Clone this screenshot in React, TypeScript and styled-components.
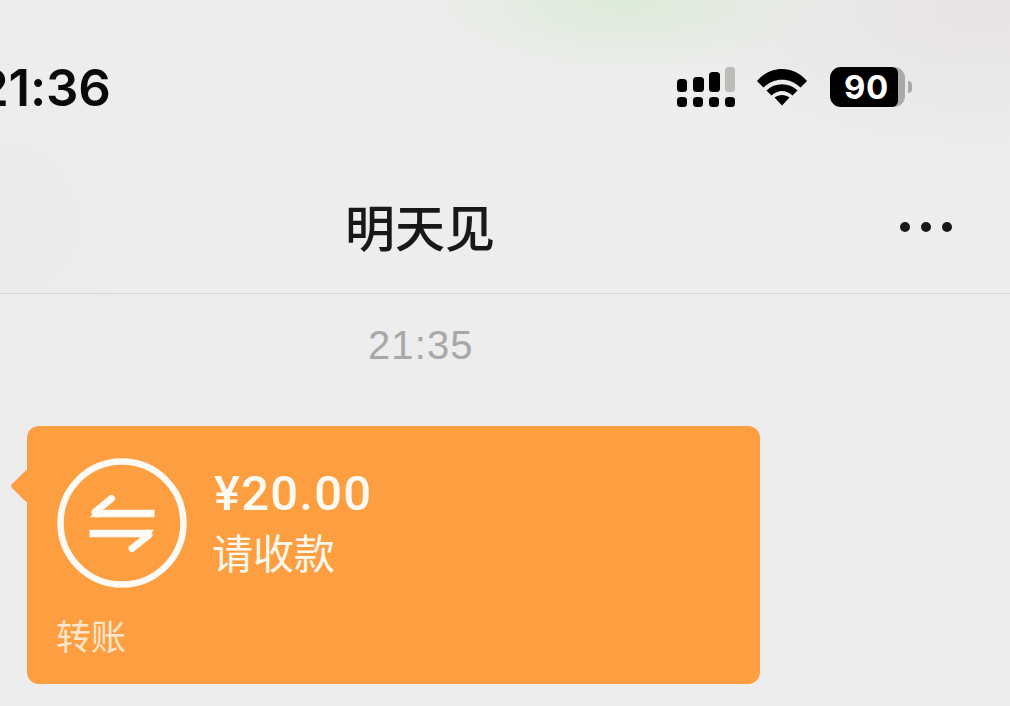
import React from "react";
import styled, { createGlobalStyle } from "styled-components";

const Global = createGlobalStyle`
  html, body { margin: 0; padding: 0; background: #ededed; }
  #root { width: 1010px; height: 706px; overflow: hidden; }
`;
const CJK = `"Noto Sans CJK SC", "Noto Sans", sans-serif`;
const Page = styled.div`
  width: 1010px; height: 706px; overflow: hidden; background: #ededed;
  display: flex; flex-direction: column;
  font-family: Inter, "Liberation Sans", ${CJK};
`;
const Header = styled.header`
  height: 294px; box-sizing: border-box; border-bottom: 1px solid #d6d6d6;
  display: flex; flex-direction: column;
  background:
    radial-gradient(ellipse 200px 75px at 625px 0px, rgba(214,234,208,.7), rgba(214,234,208,0) 100%),
    radial-gradient(ellipse 320px 150px at 980px 10px, rgba(228,224,224,.7), rgba(228,224,224,0) 100%),
    radial-gradient(ellipse 150px 150px at 0px 220px, rgba(232,232,232,.5), rgba(232,232,232,0) 100%),
    #ededed;
`;
const StatusBar = styled.div`
  height: 176px; box-sizing: border-box; padding: 58px 98px 0 0;
  display: flex; align-items: flex-start; justify-content: space-between;
`;
const Clock = styled.div`
  margin-left: -23px; font-size: 51px; line-height: 60px; font-weight: 600; color: #0a0a0a;
  letter-spacing: -.2px;
`;
const StatusIcons = styled.div`
  display: flex; align-items: flex-start; gap: 22px; padding-top: 8px;
`;
const Glyph = styled.svg`display: block; flex: none;`;
const Wifi = styled(Glyph)`margin: 2px 1px 0 0;`;
const Battery = styled.div`
  position: relative; width: 82px; height: 40px; margin-top: 1px;
`;
const BatteryBody = styled.div`
  width: 75px; height: 40px; border-radius: 11px; overflow: hidden; background: #a9a9a9;
`;
const BatteryFill = styled.div`
  width: 68px; height: 40px; border-radius: 0 6px 6px 0; background: #000;
  color: #fff; font-size: 33px; font-weight: 700; line-height: 41px;
  text-indent: 14px; letter-spacing: .5px;
`;
const BatteryCap = styled.div`
  position: absolute; right: 0; top: 14px; width: 4px; height: 12px;
  background: #a9a9a9; border-radius: 0 6px 6px 0;
`;
const NavBar = styled.div`
  flex: 1; position: relative; display: flex; align-items: center; justify-content: center;
  padding: 0 170px 20px 0;
`;
const Title = styled.h1`
  margin: 0; font-family: ${CJK}; font-size: 50px; line-height: 60px; font-weight: 500; color: #181818;
`;
const More = styled.div`
  position: absolute; right: 58px; top: 46px; display: flex; gap: 11px;
`;
const Dot = styled.span`
  width: 10px; height: 10px; border-radius: 50%; background: #181818;
`;
const Thread = styled.main`
  flex: 1; display: flex; flex-direction: column; padding: 27px 0 0 10px;
`;
const Stamp = styled.div`
  align-self: flex-start; margin-left: 358px; font-size: 40px; line-height: 48px; color: #a8a8a8;
  font-family: "Liberation Sans", sans-serif; letter-spacing: 1.1px;
`;
const Bubble = styled.article`
  position: relative; margin: 57px 0 0 17px; width: 733px; height: 258px; box-sizing: border-box;
  background: #fd9e40; border-radius: 12px; padding: 32px 30px 0;
  color: #fff; display: flex; flex-direction: column;
  &::before {
    content: ""; position: absolute; left: -12px; top: 48px; width: 24px; height: 24px;
    background: #fd9e40; transform: rotate(45deg); border-radius: 3px;
  }
`;
const BubbleMain = styled.div`display: flex; gap: 27px; position: relative;`;
const BubbleText = styled.div`display: flex; flex-direction: column; padding-top: 7px;`;
const Amount = styled.div`
  font-family: Roboto, sans-serif; font-size: 49px; line-height: 58px; font-weight: 500; letter-spacing: 1.2px;
  color: #fffaf2;
`;
const Note = styled.div`
  font-family: ${CJK}; font-size: 41px; line-height: 56px; font-weight: 400; margin-left: -2px; color: #fff8ee;
`;
const Footer = styled.div`
  font-family: ${CJK}; font-size: 35px; line-height: 44px; margin-top: 25px; margin-left: -1px; color: #ffe6cc; position: relative;
`;

const signalBars = [
  { x: 0, y: 13, w: 10, h: 13, c: "#000" },
  { x: 16, y: 11, w: 11, h: 15, c: "#000" },
  { x: 32, y: 6, w: 11, h: 20, c: "#000" },
  { x: 48, y: 1, w: 10, h: 25, c: "#bcbdb9" },
];

export default function App() {
  return (
    <Page>
      <Global />
      <Header>
        <StatusBar>
          <Clock>21:36</Clock>
          <StatusIcons>
            <Glyph width="58" height="41" viewBox="0 0 58 41">
              {signalBars.map((b) => (
                <rect key={b.x} x={b.x} y={b.y} width={b.w} height={b.h} rx="3.500" fill={b.c} />
              ))}
              {[0, 16, 32, 48].map((x) => <rect key={x} x={x} y="31" width="10" height="10" rx="3.500" fill="#000" />)}
            </Glyph>
            <Wifi width="50" height="38" viewBox="0 0 50 38">
              <path d="M0 13 C13 -3 37 -3 50 13 L43.500 19.500 C33 9 17 9 6.500 19.500 Z" fill="#000" />
              <path d="M9.500 22.500 C18 14 32 14 40.500 22.500 L35.500 27.500 C29 21.500 21 21.500 14.500 27.500 Z" fill="#000" />
              <path d="M17.500 29.500 C22 26 28 26 32.500 29.500 L25 37.500 Z" fill="#000" />
            </Wifi>
            <Battery>
              <BatteryBody>
                <BatteryFill>90</BatteryFill>
              </BatteryBody>
              <BatteryCap />
            </Battery>
          </StatusIcons>
        </StatusBar>
        <NavBar>
          <Title>明天见</Title>
          <More><Dot /><Dot /><Dot /></More>
        </NavBar>
      </Header>
      <Thread>
        <Stamp>21:35</Stamp>
        <Bubble>
          <BubbleMain>
            <Glyph width="130" height="130" viewBox="0 0 130 130">
              <circle cx="65" cy="65" r="61.500" fill="none" stroke="#fffaf4" strokeWidth="6.500" />
              <path d="M97.500 55.500 H38" fill="none" stroke="#fffaf4" strokeWidth="7.500" />
              <path d="M38 54 L54.500 40.500" fill="none" stroke="#fffaf4" strokeWidth="7" strokeLinecap="round" />
              <path d="M33 59.300 L40 50 L42 59.300 Z" fill="#fffaf4" />
              <path d="M32.500 75.500 H92" fill="none" stroke="#fffaf4" strokeWidth="7.500" />
              <path d="M92 77 L75 90.500" fill="none" stroke="#fffaf4" strokeWidth="7" strokeLinecap="round" />
              <path d="M97 71.700 L90 81 L88 71.700 Z" fill="#fffaf4" />
            </Glyph>
            <BubbleText>
              <Amount>¥20.00</Amount>
              <Note>请收款</Note>
            </BubbleText>
          </BubbleMain>
          <Footer>转账</Footer>
        </Bubble>
      </Thread>
    </Page>
  );
}
